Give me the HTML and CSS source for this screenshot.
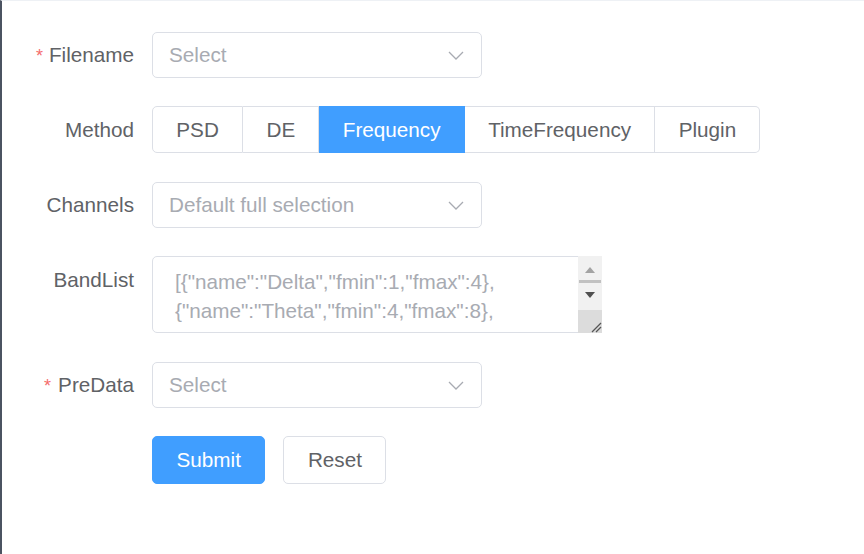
FILE: index.html
```html
<!DOCTYPE html>
<html lang="en">
<head>
<meta charset="utf-8">
<title>Feature form</title>
<link rel="stylesheet" href="styles.css">
</head>
<body>
<div class="page">
  <form class="form">
    <div class="item item-filename">
      <label class="label"><span class="req">*</span>Filename</label>
      <div class="control">
        <div class="select">
          <span class="placeholder">Select</span>
          <svg class="chev" width="16" height="9" viewBox="0 0 16 9"><polyline points="1,1 8,8 15,1" fill="none" stroke="#a8abb2" stroke-width="1.3"/></svg>
        </div>
      </div>
    </div>

    <div class="item item-method">
      <label class="label">Method</label>
      <div class="control">
        <div class="radio-group">
          <span class="rb">PSD</span>
          <span class="rb">DE</span>
          <span class="rb active">Frequency</span>
          <span class="rb">TimeFrequency</span>
          <span class="rb">Plugin</span>
        </div>
      </div>
    </div>

    <div class="item item-channels">
      <label class="label">Channels</label>
      <div class="control">
        <div class="select">
          <span class="placeholder">Default full selection</span>
          <svg class="chev" width="16" height="9" viewBox="0 0 16 9"><polyline points="1,1 8,8 15,1" fill="none" stroke="#a8abb2" stroke-width="1.3"/></svg>
        </div>
      </div>
    </div>

    <div class="item item-band">
      <label class="label label-band">BandList</label>
      <div class="control">
        <div class="ta-wrap">
          <textarea class="ta" rows="2">[{"name":"Delta","fmin":1,"fmax":4},
{"name":"Theta","fmin":4,"fmax":8},</textarea>
          <div class="sbar">
            <div class="sb-track">
              <span class="sb-up"></span>
              <span class="sb-thumb"></span>
              <span class="sb-down"></span>
            </div>
            <div class="sb-resizer">
              <svg width="12" height="12" viewBox="0 0 12 12"><line x1="2" y1="11" x2="11" y2="2" stroke="#555" stroke-width="1.2"/><line x1="6" y1="11" x2="11" y2="6" stroke="#555" stroke-width="1.2"/></svg>
            </div>
          </div>
        </div>
      </div>
    </div>

    <div class="item item-predata">
      <label class="label"><span class="req">*</span>PreData</label>
      <div class="control">
        <div class="select">
          <span class="placeholder">Select</span>
          <svg class="chev" width="16" height="9" viewBox="0 0 16 9"><polyline points="1,1 8,8 15,1" fill="none" stroke="#a8abb2" stroke-width="1.3"/></svg>
        </div>
      </div>
    </div>

    <div class="item item-buttons">
      <div class="label"></div>
      <div class="control buttons">
        <button type="button" class="btn btn-primary">Submit</button>
        <button type="button" class="btn">Reset</button>
      </div>
    </div>
  </form>
</div>
</body>
</html>
```

FILE: styles.css
```css
* { box-sizing: border-box; }
html, body {
  margin: 0;
  padding: 0;
  background: #fff;
}
body {
  font-family: "Liberation Sans", Arial, sans-serif;
  font-size: 20.7px;
  color: #606266;
}
.page {
  width: 864px;
  height: 554px;
  border-left: 2px solid #4b5361;
  border-top: 1px solid #eef1f5;
  overflow: hidden;
}
.form {
  padding-top: 31px;
  display: flex;
  flex-direction: column;
}
.item {
  display: flex;
  align-items: flex-start;
}
.label {
  width: 150px;
  flex: none;
  text-align: right;
  padding-right: 18px;
  line-height: 46px;
  color: #606266;
  white-space: nowrap;
}
.label-band { line-height: 48px; }
.req {
  color: #f56c6c;
  margin-right: 6px;
  font-size: 18px;
}
.control { flex: none; }

.item-filename { margin-bottom: 27px; }
.item-channels { margin-bottom: 28px; }
.item-predata { margin-bottom: 27px; }
.item-method { margin-bottom: 29px; }
.item-method .label { line-height: 47px; }
.item-band { margin-bottom: 29px; }
.item-predata .req { margin-right: 7px; }

.select {
  width: 330px;
  height: 46px;
  border: 1px solid #dcdfe6;
  border-radius: 5px;
  display: flex;
  align-items: center;
  justify-content: space-between;
  padding: 0 17px 0 16px;
}
.placeholder { color: #a8abb2; }
.chev { display: block; margin-top: 1px; }

.radio-group {
  display: flex;
  height: 47px;
}
.rb {
  display: flex;
  align-items: center;
  padding: 0 23.3px;
  border: 1px solid #dcdfe6;
  border-left: none;
  color: #606266;
  white-space: nowrap;
}
.rb:first-child {
  border-left: 1px solid #dcdfe6;
  border-radius: 5px 0 0 5px;
}
.rb:last-child { border-radius: 0 5px 5px 0; }
.rb.active {
  background: #409eff;
  border-color: #409eff;
  color: #fff;
}

.ta-wrap {
  position: relative;
  width: 450px;
  height: 77px;
}
.ta {
  display: block;
  width: 450px;
  height: 77px;
  margin: 0;
  border: 1px solid #dcdfe6;
  border-radius: 5px;
  padding: 10px 30px 0 22px;
  font-family: "Liberation Sans", Arial, sans-serif;
  font-size: 20.7px;
  line-height: 29px;
  color: #a8abb2;
  resize: none;
  overflow: hidden;
  white-space: pre;
  outline: none;
}
.sbar {
  position: absolute;
  top: 0;
  right: 0;
  width: 24px;
  height: 77px;
  display: flex;
  flex-direction: column;
}
.sb-track {
  flex: 1;
  background: #f1f1f1;
  position: relative;
}
.sb-up {
  position: absolute;
  left: 7px;
  top: 11px;
  width: 0; height: 0;
  border-left: 5px solid transparent;
  border-right: 5px solid transparent;
  border-bottom: 6px solid #a3a3a3;
}
.sb-thumb {
  position: absolute;
  left: 1px;
  right: 1px;
  top: 24px;
  height: 3px;
  background: #c1c1c1;
}
.sb-down {
  position: absolute;
  left: 7px;
  top: 36px;
  width: 0; height: 0;
  border-left: 5px solid transparent;
  border-right: 5px solid transparent;
  border-top: 6px solid #505050;
}
.sb-resizer {
  height: 23px;
  background: #dcdcdc;
  display: flex;
  align-items: flex-end;
  justify-content: flex-end;
}
.sb-resizer svg { display: block; }

.buttons {
  display: flex;
  gap: 18px;
}
.btn {
  height: 48px;
  padding: 0 23.5px;
  border: 1px solid #dcdfe6;
  border-radius: 5px;
  background: #fff;
  color: #606266;
  font-family: "Liberation Sans", Arial, sans-serif;
  font-size: 20.7px;
  cursor: pointer;
}
.btn-primary {
  background: #409eff;
  border-color: #409eff;
  color: #fff;
}
```
